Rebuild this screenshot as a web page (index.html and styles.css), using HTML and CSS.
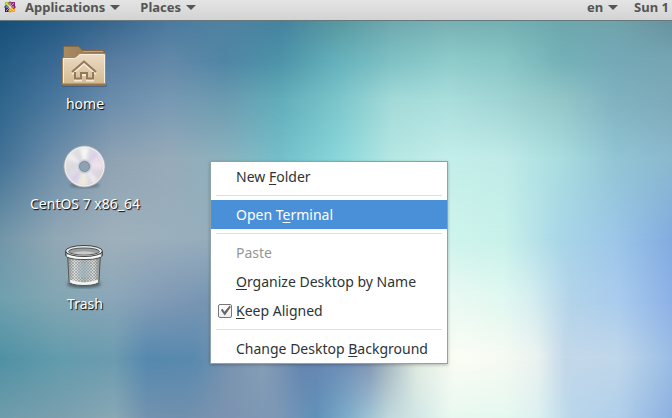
FILE: index.html
```html
<!DOCTYPE html>
<html lang="en">
<head>
    <meta charset="UTF-8">
    <meta name="viewport" content="width=device-width, initial-scale=1.0">
    <title>Desktop</title>
    <link rel="stylesheet" href="styles.css">
</head>
<body>
    <header class="panel">
        <button class="panel-btn apps">
            <svg class="logo" width="14" height="14" viewBox="0 0 14 14">
                <rect x="2" y="1" width="5" height="5" fill="#9ccd2a"/>
                <rect x="7" y="1" width="5" height="5" fill="#932279"/>
                <rect x="2" y="6" width="5" height="5" fill="#262577"/>
                <rect x="7" y="6" width="5" height="5" fill="#efa724"/>
                <path d="M7 0l2 2-2 3-2-3z" fill="#a5468f"/>
                <path d="M13 6l-2 2-3-2 3-2z" fill="#932279"/>
                <path d="M7 12l-2-2 2-3 2 3z" fill="#e6a428"/>
                <path d="M1 6l2-2 3 2-3 2z" fill="#403f8a"/>
                <path d="M3 2l8 8M11 2l-8 8M7 2v8M3 6h8" stroke="#eee8ee" stroke-width=".7"/>
            </svg>
            Applications <span class="arrow"></span>
        </button>
        <button class="panel-btn">Places <span class="arrow"></span></button>
        <div class="status">
            <button class="panel-btn">en <span class="arrow"></span></button>
            <button class="panel-btn">Sun 1</button>
        </div>
    </header>

    <main class="desktop">
        <div class="wallpaper">
            <div class="band band1"></div>
            <div class="band band2"></div>
            <div class="band band3"></div>
            <div class="band band4"></div>
            <div class="band band5"></div>
            <div class="band band6"></div>
            <div class="band band7"></div>
            <div class="band band8"></div>
        </div>

        <div class="icons">
            <button class="icon">
                <svg width="48" height="48" viewBox="0 0 48 48">
                    <defs>
                        <linearGradient id="folder" x1="0" y1="0" x2="0" y2="1">
                            <stop offset="0" stop-color="#eddcc5"/>
                            <stop offset="1" stop-color="#d3b990"/>
                        </linearGradient>
                        <linearGradient id="tab" x1="0" y1="0" x2="1" y2="0">
                            <stop offset="0" stop-color="#aa8b60"/>
                            <stop offset="1" stop-color="#8c7353"/>
                        </linearGradient>
                    </defs>
                    <rect x="1" y="41" width="45" height="4" rx="2" fill="#27374a" opacity=".35"/>
                    <path d="M2.500 5.500q0-1 1-1h14l4 4h21q1 0 1 1V24h-41z" fill="url(#tab)" stroke="#866743"/>
                    <path d="M22 9.500h20" stroke="#c1a276"/>
                    <path d="M1.500 17q0-1.500 1.500-1.500h10.500q1 0 2-1l2-2q1-1 2.500-1H43q1.500 0 1.500 1.500v29q0 1-1 1h-41q-1 0-1-1z" fill="url(#folder)" stroke="#a78457"/>
                    <path d="M2.500 41V16.500h11q1.500 0 3-1.500l1.500-1.500q1-1 2-1h22.500q1 0 1 1V41" fill="none" stroke="#f7eddc"/>
                    <path d="M2 42.500h42" stroke="#967550" stroke-width="2"/>
                    <path d="M11 31l12-10.500L35 31M14 31v6.500h6V32h6v5.500h6V31" transform="translate(0 1)" fill="none" stroke="#f6ead6" stroke-width="2"/>
                    <path d="M11 30l12-10.500L35 30M14 30v6.500h6V31h6v5.500h6V30" fill="none" stroke="#92795a" stroke-width="2"/>
                </svg>
                <span>home</span>
            </button>
            <button class="icon">
                <svg width="48" height="48" viewBox="0 0 48 48">
                    <defs>
                        <linearGradient id="disc" x1="0" y1="0" x2="1" y2="1">
                            <stop offset="0" stop-color="#e9e9e7"/>
                            <stop offset=".35" stop-color="#dadade"/>
                            <stop offset=".55" stop-color="#e4dfea"/>
                            <stop offset="1" stop-color="#cfccd0"/>
                        </linearGradient>
                        <filter id="soft"><feGaussianBlur stdDeviation="1.500"/></filter>
                    </defs>
                    <ellipse cx="23.500" cy="43" rx="15" ry="3" fill="#34495a" opacity=".5" filter="url(#soft)"/>
                    <circle cx="23.500" cy="24.500" r="20.500" fill="url(#disc)" stroke="#a3a6aa"/>
                    <g filter="url(#soft)">
                        <path d="M23.500 24.500L19 6l9-.5z" fill="#fff" opacity=".75"/>
                        <path d="M23.500 24.500L6 17l4-6z" fill="#fff" opacity=".5"/>
                        <path d="M23.500 24.500L33 9l5 4z" fill="#d7c6e6" opacity=".6"/>
                        <path d="M23.500 24.500L42 18v9z" fill="#f3e3ef" opacity=".8"/>
                        <path d="M23.500 24.500L17 43h10z" fill="#f4efd7" opacity=".8"/>
                        <path d="M23.500 24.500L9 36l6 5z" fill="#cdc4e8" opacity=".55"/>
                        <path d="M23.500 24.500L37 38l-5 4z" fill="#fff" opacity=".5"/>
                    </g>
                    <circle cx="23.500" cy="24.500" r="19.500" fill="none" stroke="#f7f7f7" opacity=".8"/>
                    <circle cx="23.500" cy="24.500" r="7" fill="#c2c5d2" stroke="#d9dbe3"/>
                    <circle cx="23.500" cy="24.500" r="5" fill="#8ca1b2" stroke="#82899a"/>
                </svg>
                <span>CentOS 7 x86_64</span>
            </button>
            <button class="icon">
                <svg width="48" height="48" viewBox="0 0 48 48">
                    <defs>
                        <linearGradient id="can" x1="0" y1="0" x2="1" y2="0">
                            <stop offset="0" stop-color="#8a8c8b"/>
                            <stop offset=".2" stop-color="#e2e4e2"/>
                            <stop offset=".5" stop-color="#b3b9ba"/>
                            <stop offset=".8" stop-color="#d9dbd9"/>
                            <stop offset="1" stop-color="#858786"/>
                        </linearGradient>
                        <pattern id="mesh" width="3" height="3" patternUnits="userSpaceOnUse">
                            <path d="M0 0l3 3M3 0L0 3" stroke="#7d8283" stroke-width=".5"/>
                        </pattern>
                    </defs>
                    <ellipse cx="23" cy="42" rx="17" ry="4" fill="#26343b" opacity=".6" filter="url(#soft)"/>
                    <path d="M6.500 12l1.500 27q0 4.500 15 4.500T38 39l1.500-27z" fill="url(#can)" stroke="#555756"/>
                    <path d="M8 17l1.500 21q13.500 4 27 0L38 17z" fill="url(#mesh)"/>
                    <path d="M17 21h12l-1 14H18z" fill="#9fb9c5" opacity=".5"/>
                    <path d="M9 39q14 5.500 28 0" fill="none" stroke="#f4f4f4" stroke-width="2.500"/>
                    <path d="M4.500 9v4q0 4.500 18.500 4.500T41.500 13V9z" fill="url(#can)" stroke="#4d4f4e"/>
                    <path d="M6 13.500q17 5 34 0" fill="none" stroke="#fafafa" stroke-width="2"/>
                    <ellipse cx="23" cy="9" rx="18.500" ry="5.500" fill="#e8e9e8" stroke="#3f4241"/>
                    <ellipse cx="23" cy="9.500" rx="15.500" ry="3.500" fill="#999e9e" stroke="#575b5b"/>
                    <path d="M11 11q12-3.500 24 0-12 3-24 0z" fill="#c7cccb"/>
                </svg>
                <span>Trash</span>
            </button>
        </div>

        <div class="menu">
            <button class="item">New <u>F</u>older</button>
            <hr>
            <button class="item selected">Open T<u>e</u>rminal</button>
            <hr>
            <button class="item" disabled>Paste</button>
            <button class="item"><u>O</u>rganize Desktop by Name</button>
            <label class="item check"><input type="checkbox" checked><span><u>K</u>eep Aligned</span></label>
            <hr>
            <button class="item">Change Desktop <u>B</u>ackground</button>
        </div>
    </main>
</body>
</html>
```

FILE: styles.css
```css
*{
    box-sizing: border-box;
}

body{
    margin: 0;
    min-height: 100vh;
    display: flex;
    flex-direction: column;
    font-family: "Noto Sans", "Open Sans", sans-serif;
    font-size: 14px;
    color: #2e3436;
}

button{
    font: inherit;
    color: inherit;
    background: none;
    border: 0;
    padding: 0;
}

u{
    text-underline-offset: 2px;
    text-decoration-thickness: 1px;
    text-decoration-skip-ink: none;
}

/* top panel */
.panel{
    display: flex;
    align-items: flex-start;
    gap: 20px;
    height: 21px;
    padding: 0 3px;
    background: linear-gradient(#e4e4e4, #d3d3d3);
    border-bottom: 1px solid #66797d;
}

.panel-btn{
    display: flex;
    align-items: center;
    gap: 5px;
    font-size: 13px;
    line-height: 15px;
    font-weight: bold;
    color: #555;
    white-space: nowrap;
}

.logo{
    margin-right: 3px;
}

.status{
    display: flex;
    gap: 16px;
    margin-left: auto;
}

.arrow{
    border: 5px solid transparent;
    border-top-color: #555;
    border-bottom: 0;
}

/* desktop */
.desktop{
    position: relative;
    flex: 1;
    display: flex;
}

.wallpaper{
    position: absolute;
    inset: 0;
    overflow: hidden;
}

/* each band fades in over the one before it */
.band{
    position: absolute;
    inset: 0;
    mask-image: linear-gradient(transparent var(--from), #000 var(--to));
}

.band1{
    mask-image: none;
    background: linear-gradient(to right, #154f77, #245a83, #3a678f, #4a7a9f, #5082a2, #44839f, #56989f, #6ea9ae, #78b1b4, #74b1b3, #6ca8ad, #70a4ac, #68929f);
}

.band2{
    --from: 0%;
    --to: 10%;
    background: linear-gradient(to right, #235b84, #3a6994, #587da1, #6388a8, #5086a5, #4d93a8, #64b0bb, #7ec1c4, #8ecbcb, #8ac6c6, #74b1b8, #74a9b7, #76a5b3);
}

.band3{
    --from: 10%;
    --to: 20%;
    background: linear-gradient(to right, #2f658c, #4b789d, #6b8dac, #7799b3, #6c9bb0, #62adba, #7ac5ca, #a3dad9, #a9dedc, #9fd4d4, #93c7c8, #80b2c0, #7daab9);
}

.band4{
    --from: 20%;
    --to: 35%;
    background: linear-gradient(to right, #427296, #6d8eaa, #8fa3b4, #97abb9, #8cb2be, #74bfca, #88d6da, #b5e7e3, #c4eeea, #c0ebe8, #a9dde0, #92c5d4, #8bb9cf);
}

.band5{
    --from: 35%;
    --to: 55%;
    background: linear-gradient(to right, #7296a8, #92a8b5, #9fb0bb, #9aafbd, #95acbd, #86b5c4, #9bd8da, #b7e8e3, #cef4ec, #c8f1ea, #a9d6e8, #9cc6e8, #82ace0);
}

.band6{
    --from: 55%;
    --to: 70%;
    background: linear-gradient(to right, #6fa0ae, #83a6b3, #8ba6b9, #8099b5, #7394b2, #7a98b6, #83a8c0, #c0e0dc, #eaf9f3 67%, #e0f8f1 75%, #d6eef0 79%, #b2d3e9 85%, #a9cbee 92%, #8cb1e6);
}

.band7{
    --from: 70%;
    --to: 85%;
    background: linear-gradient(to right, #4f91a4, #629cac 9%, #6b9bb0 17%, #5588af 22%, #5a8aae 29%, #7893b0 34%, #879fb6 39%, #6584b0 45%, #6a8bb5 50%, #8094b4 55%, #a8b8c0 58%, #e0ebe0 62%, #fbfdf5 68%, #f6faf2 75%, #eaf2f0 80%, #c4d8e9 84%, #c0d7ea 92%, #9bbde5);
}

.band8{
    --from: 85%;
    --to: 100%;
    background: linear-gradient(to right, #6f9cab, #7a9fae 9%, #88a8b4 17%, #7292af 22%, #7090ae 27%, #7c94b0 34%, #7d98b5 41%, #6090b8 47%, #80aecb 52%, #c0d8dc 58%, #e8f8f0 67%, #e5f8f0 75%, #dcf0f0 80%, #b8d6ea 85%, #b0cfea 92%, #8cb0e0);
}

.icons{
    position: relative;
    display: flex;
    flex-direction: column;
    gap: 28px;
    width: 170px;
    padding: 21px 0;
}

.icon{
    display: flex;
    flex-direction: column;
    align-items: center;
    gap: 4px;
    height: 72px;
    line-height: 20px;
    color: #fff;
    text-shadow: 1px 1px 1px #000;
}

/* context menu */
.menu{
    position: absolute;
    left: 211px;
    top: 141px;
    width: 236px;
    background: #fff;
    box-shadow: 0 0 0 1px #8fa3a6, 0 1px 3px 1px #00000040;
}

.menu hr{
    margin: 4px 5px;
    border: 0;
    border-top: 1px solid #d9e2e4;
}

.item{
    display: block;
    width: 100%;
    height: 29px;
    padding-left: 25px;
    line-height: 30px;
    text-align: left;
    white-space: nowrap;
}

.item:disabled{
    color: #959798;
}

.selected{
    background: #4a90d9;
    color: #fff;
}

.check{
    display: flex;
    align-items: center;
    gap: 4px;
    padding-left: 7px;
}

.check input{
    appearance: none;
    width: 14px;
    height: 14px;
    margin: 0;
    border: 1px solid #777;
    border-radius: 2px;
    background: linear-gradient(#fff, #eee);
}

.check input:checked::after{
    content: "";
    display: block;
    height: 12px;
    background: #666;
    clip-path: polygon(15% 45%, 30% 35%, 45% 60%, 90% 8%, 98% 22%, 48% 92%);
}
```
